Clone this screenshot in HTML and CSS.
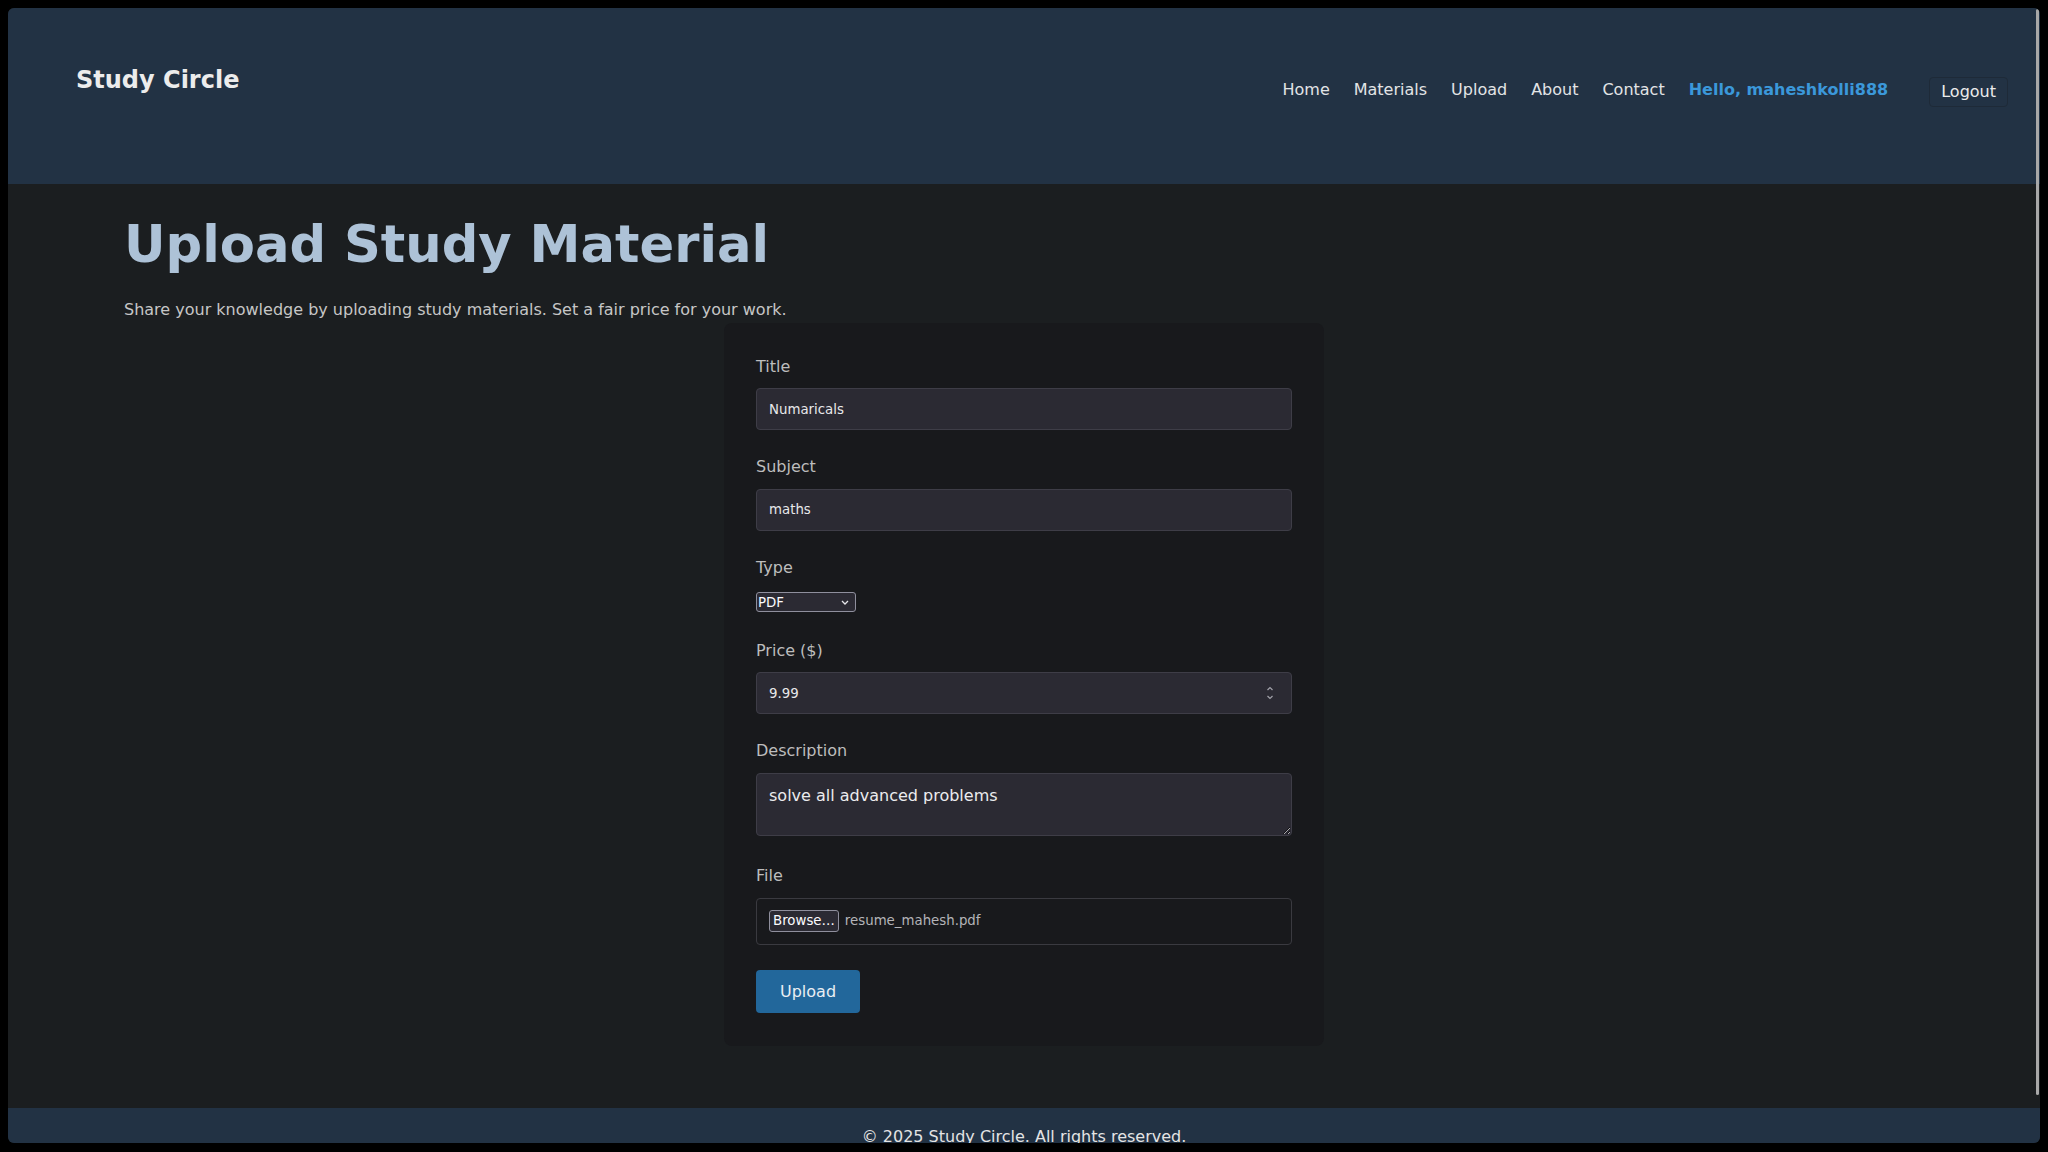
FILE: index.html
```html
<!DOCTYPE html>
<html lang="en">
<head>
<meta charset="utf-8">
<title>Upload Study Material - Study Circle</title>
<link rel="stylesheet" href="styles.css">
</head>
<body>
<div class="window">
  <div class="page">
    <header class="site-header">
      <div class="logo">Study Circle</div>
      <nav class="nav">
        <a class="nav-link" href="#">Home</a>
        <a class="nav-link" href="#">Materials</a>
        <a class="nav-link" href="#">Upload</a>
        <a class="nav-link" href="#">About</a>
        <a class="nav-link" href="#">Contact</a>
        <span class="greeting">Hello, maheshkolli888</span>
        <button class="logout" type="button">Logout</button>
      </nav>
    </header>
    <main class="main">
      <div class="container">
        <h1 class="page-title">Upload Study Material</h1>
        <p class="subtitle">Share your knowledge by uploading study materials. Set a fair price for your work.</p>
        <form class="card">
          <div class="form-group">
            <label class="form-label" for="title">Title</label>
            <input class="form-input" id="title" type="text" value="Numaricals">
          </div>
          <div class="form-group">
            <label class="form-label" for="subject">Subject</label>
            <input class="form-input" id="subject" type="text" value="maths">
          </div>
          <div class="form-group">
            <label class="form-label" for="type">Type</label>
            <span class="select-wrap">
              <select class="form-select" id="type">
                <option>PDF</option>
                <option>Notes</option>
                <option>Video</option>
              </select>
              <svg class="select-arrow" width="8" height="5" viewBox="0 0 8 5"><path d="M1 1 L4 4 L7 1" fill="none" stroke="#e6e6ea" stroke-width="1.3"/></svg>
            </span>
          </div>
          <div class="form-group">
            <label class="form-label" for="price">Price ($)</label>
            <div class="number-wrap">
              <input class="form-input" id="price" type="text" value="9.99">
              <svg class="spinner" width="8" height="14" viewBox="0 0 8 14"><path d="M1.5 4 L4 1.5 L6.5 4 M1.5 10 L4 12.5 L6.5 10" fill="none" stroke="#a3a3ab" stroke-width="1.2"/></svg>
            </div>
          </div>
          <div class="form-group form-group--textarea">
            <label class="form-label" for="desc">Description</label>
            <textarea class="form-textarea" id="desc">solve all advanced problems</textarea>
          </div>
          <div class="form-group form-group--file">
            <span class="form-label">File</span>
            <div class="file-box">
              <span class="file-button">Browse…</span>
              <span class="file-name">resume_mahesh.pdf</span>
            </div>
          </div>
          <button class="submit" type="button">Upload</button>
        </form>
      </div>
    </main>
    <footer class="site-footer">
      <p class="footer-text">© 2025 Study Circle. All rights reserved.</p>
    </footer>
  </div>
  <div class="scrollbar"></div>
</div>
</body>
</html>
```
FILE: styles.css
```css
html, body {
  margin: 0;
  padding: 0;
  background: #000;
}
body {
  padding: 8px 8px 9px 8px;
  font-family: "DejaVu Sans", "Liberation Sans", sans-serif;
  color: #e0e0e0;
}
.window {
  position: relative;
  width: 2032px;
  height: 1135px;
  border-radius: 6px;
  overflow: hidden;
  background: #1b1e20;
}
.page {
  display: flex;
  flex-direction: column;
}

/* Header */
.site-header {
  box-sizing: border-box;
  height: 176px;
  background: #223244;
  display: flex;
  justify-content: space-between;
  align-items: flex-start;
  padding: 58px 32px 0 68px;
}
.logo {
  font-size: 24px;
  font-weight: bold;
  line-height: 28px;
  color: #ececec;
}
.nav {
  display: flex;
  align-items: flex-start;
  gap: 24px;
  margin-top: 11px;
}
.nav-link {
  margin-top: 3px;
  font-size: 16px;
  line-height: normal;
  color: #e2e4e6;
  text-decoration: none;
}
.greeting {
  margin-top: 3px;
  font-size: 16px;
  line-height: normal;
  font-weight: bold;
  color: #3b98da;
}
.logout {
  margin-left: 17px;
  font-family: inherit;
  font-size: 16px;
  line-height: 18px;
  padding: 5px 11px;
  border: 1px solid #1e2a38;
  border-radius: 4px;
  background: #223244;
  color: #ececec;
}

/* Main */
.main {
  padding: 30px 0 62px;
}
.container {
  padding: 0 116px;
}
.page-title {
  margin: 0;
  font-size: 51.2px;
  line-height: 60px;
  font-weight: bold;
  color: #adc2d7;
}
.subtitle {
  margin: 23px 0 0;
  font-size: 16px;
  line-height: 25.6px;
  color: #c6c6c6;
}
.card {
  box-sizing: border-box;
  width: 600px;
  margin: 0 auto;
  padding: 31px 32px 33px;
  background: #18191c;
  border-radius: 8px;
}
.form-group {
  margin-bottom: 24px;
}
.form-group--textarea {
  padding-bottom: 2.5px;
}
.form-group--file {
  padding-bottom: 1px;
}
.form-label {
  display: block;
  margin-bottom: 9px;
  font-size: 16px;
  line-height: 25.6px;
  color: #bdbdbd;
}
.form-input {
  display: block;
  box-sizing: border-box;
  width: 100%;
  height: 42px;
  padding: 12px;
  border: 1px solid #3e3d47;
  border-radius: 4px;
  background: #2b2a33;
  color: #e8e8ea;
  font-family: "DejaVu Sans", sans-serif;
  font-size: 13.333px;
  line-height: 16px;
  outline: none;
}
.select-wrap {
  position: relative;
  display: block;
  width: 100px;
  padding: 3px 0 2.2px;
}
.form-select {
  display: block;
  box-sizing: border-box;
  width: 100px;
  height: 19.3px;
  padding: 0 0 0 1px;
  border: 1px solid #8f8f9d;
  border-radius: 3px;
  background: #2b2a33;
  color: #fbfbfe;
  font-family: "DejaVu Sans", sans-serif;
  font-size: 13.333px;
  line-height: 15px;
  appearance: none;
  -webkit-appearance: none;
  outline: none;
}
.select-arrow {
  position: absolute;
  right: 7px;
  top: 10.3px;
}
.number-wrap {
  position: relative;
}
.spinner {
  position: absolute;
  right: 18px;
  top: 50%;
  transform: translateY(-50%);
}
.form-textarea {
  display: block;
  box-sizing: border-box;
  width: 100%;
  height: 63.4px;
  padding: 12px;
  border: 1px solid #3e3d47;
  border-radius: 4px;
  background: #2b2a33;
  color: #ececee;
  font-family: "DejaVu Sans", sans-serif;
  font-size: 16px;
  line-height: normal;
  resize: vertical;
  outline: none;
}
.file-box {
  box-sizing: border-box;
  display: flex;
  align-items: center;
  gap: 6px;
  height: 47px;
  padding: 12px;
  border: 1px solid #3a3a40;
  border-radius: 4px;
}
.file-button {
  box-sizing: border-box;
  height: 21.4px;
  padding: 2px 3px;
  border: 1px solid #8f8f9d;
  border-radius: 3px;
  background: #2b2a33;
  color: #fbfbfe;
  font-size: 13.333px;
  line-height: 15.5px;
}
.file-name {
  font-size: 13.333px;
  line-height: 15.5px;
  color: #b4b4b8;
}
.submit {
  display: block;
  padding: 12px 24px;
  border: none;
  border-radius: 4px;
  background: #22679b;
  color: #e9eef3;
  font-family: "DejaVu Sans", sans-serif;
  font-size: 16px;
  line-height: normal;
}

/* Footer */
.site-footer {
  background: #223244;
  padding: 16px;
  text-align: center;
}
.footer-text {
  margin: 0;
  font-size: 16px;
  line-height: 25.6px;
  color: #e4e4e4;
}

/* Overlay scrollbar */
.scrollbar {
  position: absolute;
  top: 1px;
  right: 1px;
  width: 3px;
  height: 1086px;
  border-radius: 2px;
  background: #a8a8a8;
}
```
